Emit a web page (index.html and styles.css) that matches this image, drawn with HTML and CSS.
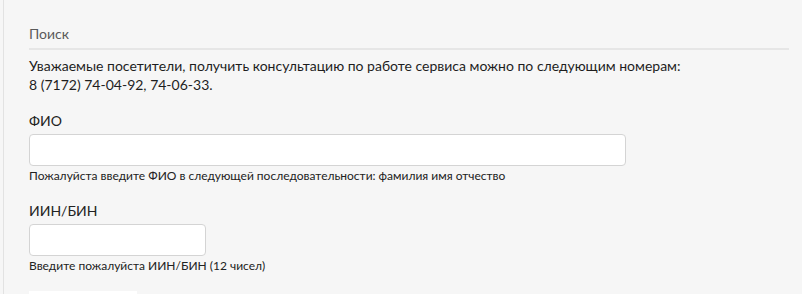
FILE: index.html
```html
<!DOCTYPE html>
<html lang="ru">
<head>
<meta charset="utf-8">
<title>Поиск</title>
<link rel="stylesheet" href="styles.css">
</head>
<body>
<div class="panel">
  <div class="panel-head">Поиск</div>
  <p class="notice">Уважаемые посетители, получить консультацию по работе сервиса можно по следующим номерам:<br>8 (7172) 74-04-92, 74-06-33.</p>
  <div class="field">
    <label class="label">ФИО</label>
    <input class="input input-wide" type="text">
    <div class="help">Пожалуйста введите ФИО в следующей последовательности: фамилия имя отчество</div>
  </div>
  <div class="field">
    <label class="label">ИИН/БИН</label>
    <input class="input input-short" type="text">
    <div class="help">Введите пожалуйста ИИН/БИН (12 чисел)</div>
  </div>
  <div class="btn-stub"></div>
</div>
</body>
</html>
```
FILE: styles.css
```css
html, body {
  margin: 0;
  padding: 0;
  background: #f6f6f6;
  height: 100%;
  overflow: hidden;
}
body {
  font-family: Lato, "Liberation Sans", sans-serif;
  color: #222;
}
.panel {
  margin-left: 3px;
  border-left: 1px solid #e2e2e2;
  padding: 24px 13px 0 25px;
  min-height: 100%;
  box-sizing: border-box;
}
.panel-head {
  font-size: 14px;
  color: #5a5a5a;
  line-height: 20px;
  padding-bottom: 4px;
  border-bottom: 2px solid #e6e6e6;
}
.notice {
  font-size: 14px;
  line-height: 19px;
  margin: 6px 0 0;
  color: #1e1e1e;
}
.field {
  margin-top: 18px;
}
.field + .field {
  margin-top: 19px;
}
.label {
  display: block;
  font-size: 14px;
  line-height: 18px;
  color: #222;
  margin-bottom: 4px;
}
.input {
  display: block;
  height: 32px;
  box-sizing: border-box;
  border: 1px solid #d4d4d4;
  border-radius: 4px;
  background: #fff;
  margin: 0;
}
.input-wide { width: 597px; }
.input-short { width: 177px; }
.help {
  font-size: 12px;
  line-height: 15px;
  margin-top: 2px;
  color: #222;
}
.btn-stub {
  margin-top: 18px;
  width: 108px;
  height: 10px;
  background: #fff;
}
```
